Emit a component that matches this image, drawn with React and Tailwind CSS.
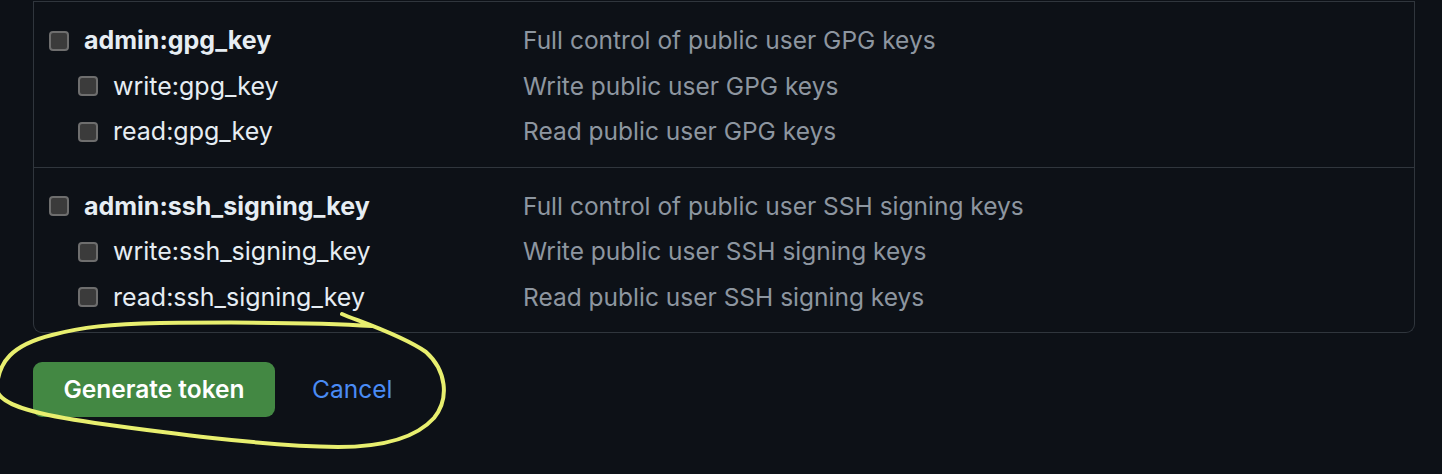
const groups = [
  {
    scope: "admin:gpg_key",
    desc: "Full control of public user GPG keys",
    children: [
      { scope: "write:gpg_key", desc: "Write public user GPG keys" },
      { scope: "read:gpg_key", desc: "Read public user GPG keys" },
    ],
  },
  {
    scope: "admin:ssh_signing_key",
    desc: "Full control of public user SSH signing keys",
    children: [
      { scope: "write:ssh_signing_key", desc: "Write public user SSH signing keys" },
      { scope: "read:ssh_signing_key", desc: "Read public user SSH signing keys" },
    ],
  },
];

function Box() {
  return (
    <span className="block w-[20px] h-[20px] shrink-0 rounded-[4px] border-2 border-[#6e6e6e] bg-[#3b3b3b]" />
  );
}

function Row({ scope, desc, parent }) {
  return (
    <div className="flex items-center h-[45.5px]">
      <div className={`flex items-center w-[489px] shrink-0 ${parent ? "pl-[15px] gap-[15px]" : "pl-[44px] gap-[15px]"}`}>
        <Box />
        <span className={parent ? "font-bold text-[#e6edf3] text-[25px]" : "text-[#e6edf3] text-[25px]"}>{scope}</span>
      </div>
      <span className="text-[#8d96a0]">{desc}</span>
    </div>
  );
}

export default function App() {
  return (
    <div
      className="relative w-[1442px] h-[474px] overflow-hidden bg-[#0d1117] text-[24.5px] pt-px"
      style={{ fontFamily: "Inter, 'Liberation Sans', sans-serif" }}
    >
      <div className="ml-[33px] w-[1382px] border-x border-b border-[#30363d] rounded-b-[9px]">
        {groups.map((g) => (
          <div key={g.scope} className="border-t border-[#30363d] pt-[16px] pb-[12px]">
            <Row scope={g.scope} desc={g.desc} parent />
            {g.children.map((c) => (
              <Row key={c.scope} scope={c.scope} desc={c.desc} />
            ))}
          </div>
        ))}
      </div>

      <div className="flex items-center ml-[33px] mt-[29px] gap-[37px]">
        <button className="h-[55px] w-[242px] rounded-[9px] bg-[#438843] text-white font-semibold text-[24.5px]">
          Generate token
        </button>
        <a className="text-[#4a8cf5] text-[24.5px]">Cancel</a>
      </div>

      {/* hand drawn highlight */}
      <svg className="absolute left-0 top-0 pointer-events-none" width="1442" height="474">
        <path
          d="M342,314 C355,320 400,334 426,352 C446,370 450,398 434,418 C416,438 382,447 338,447 C262,446 160,432 95,423 C45,416 -4,406 -3,388 C-2,362 12,345 52,335 C82,327 110,324 160,323 C250,322 330,323 372,326"
          fill="none"
          stroke="#e8ef6f"
          strokeWidth="4"
          strokeLinecap="round"
          strokeLinejoin="round"
        />
      </svg>
    </div>
  );
}
